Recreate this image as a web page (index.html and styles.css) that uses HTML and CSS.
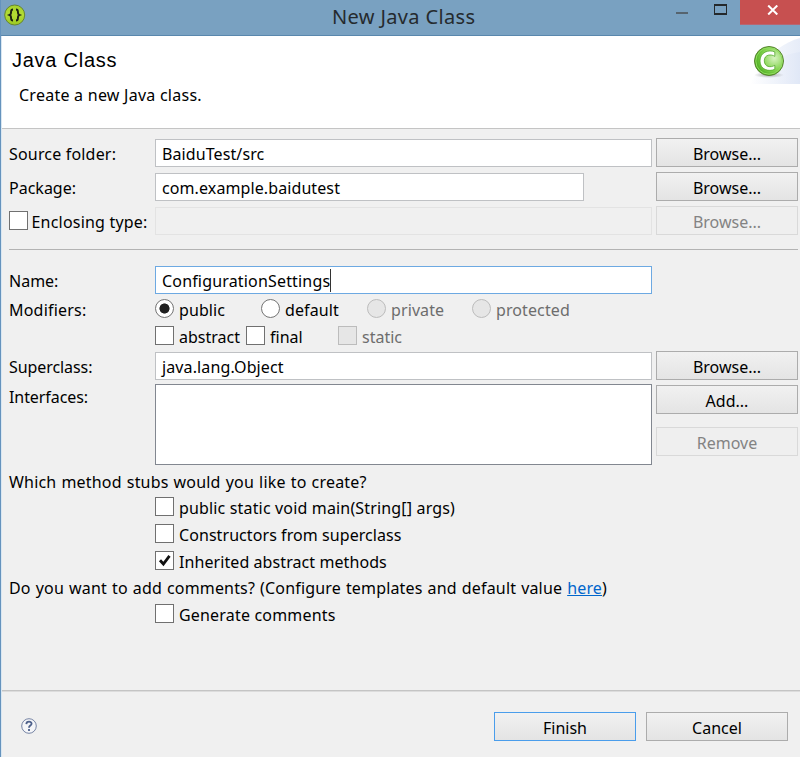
FILE: index.html
```html
<!DOCTYPE html>
<html lang="en">
<head>
<meta charset="utf-8">
<title>New Java Class</title>
<link rel="stylesheet" href="styles.css">
</head>
<body>
<div class="window">
  <header class="titlebar">
    <svg class="app-icon" width="22" height="22" viewBox="0 0 22 22">
      <defs><linearGradient id="lime" x1="0" y1="0" x2="0" y2="1"><stop offset="0" stop-color="#a4d12c"/><stop offset=".5" stop-color="#b3dc33"/><stop offset="1" stop-color="#9bc823"/></linearGradient></defs>
      <circle cx="10.7" cy="11" r="10" fill="url(#lime)" stroke="#67862c"/>
      <path d="M9 5.5C7.4 5.5 7.1 6.2 7.1 7.5C7.1 9.3 7.1 10.5 5.7 11C7.1 11.5 7.1 12.7 7.1 14.5C7.1 15.8 7.4 16.5 9 16.5M12 5.5C13.6 5.5 13.9 6.2 13.9 7.5C13.9 9.3 13.9 10.5 15.3 11C13.9 11.5 13.9 12.7 13.9 14.5C13.9 15.8 13.6 16.5 12 16.5" fill="none" stroke="#1c2113" stroke-width="1.9"/>
    </svg>
    <h1 class="title">New Java Class</h1>
    <div class="controls">
      <span class="minimize"></span>
      <span class="maximize"></span>
      <span class="close"><svg width="12" height="10" viewBox="0 0 12 10"><path d="M1.2.5L10.3 9.5M10.3.5L1.2 9.5" stroke="#fff" stroke-width="2"/></svg></span>
    </div>
  </header>
  <section class="banner">
    <div class="banner-text">
      <h2>Java Class</h2>
      <p><span class="t w-create">Create a new Java class.</span></p>
    </div>
    <svg class="class-icon" width="50" height="48" viewBox="0 0 50 48">
      <defs>
        <linearGradient id="sky" x1="0" x2="1"><stop offset="0" stop-color="#fff"/><stop offset="1" stop-color="#dee6f6"/></linearGradient>
        <radialGradient id="green" cx=".68" cy=".4" r=".75"><stop offset="0" stop-color="#d8f4c2"/><stop offset=".55" stop-color="#84d44f"/><stop offset="1" stop-color="#38a010"/></radialGradient>
        <radialGradient id="shade"><stop offset="0" stop-color="#777" stop-opacity=".6"/><stop offset="1" stop-color="#777" stop-opacity="0"/></radialGradient>
      </defs>
      <path d="M0 48C10 28 27 8 50 2V48Z" fill="url(#sky)" opacity=".75"/>
      <path d="M0 48C10 36 25 19 50 16V48Z" fill="url(#sky)" opacity=".75"/>
      <ellipse cx="19" cy="39" rx="15" ry="3" fill="url(#shade)"/>
      <circle cx="19" cy="25" r="14.5" fill="url(#green)" stroke="#57822f"/>
      <circle cx="19" cy="25" r="13.2" fill="none" stroke="#91db60" stroke-width="1"/>
      <path d="M24.8 15.9V20.4C21.5 17.9 14.3 18.2 14.3 24.7C14.3 31.3 21 31.8 24.8 29.3V33.3C18.8 36 10 33.7 10 25C10 16.2 18.7 13.2 24.8 15.9Z" fill="#fff" stroke="#45a01d" stroke-width=".7"/>
    </svg>
  </section>
  <main class="form">
    <div class="row"><label class="label"><span class="t w-source">Source folder:</span></label><div class="field"><span class="t w-src">BaiduTest/src</span></div><button>Browse...</button></div>
    <div class="row"><label class="label"><span class="t w-pack">Package:</span></label><div class="field short"><span class="t w-com">com.example.baidutest</span></div><button>Browse...</button></div>
    <div class="row"><label class="label option"><i class="check"></i><span class="t w-encl">Enclosing type:</span></label><div class="field off"></div><button disabled>Browse...</button></div>
    <hr>
    <div class="row name-row"><label class="label"><span class="t w-name">Name:</span></label><div class="field focus"><span class="t w-config">ConfigurationSettings</span><i class="caret"></i></div></div>
    <div class="row modifiers"><span class="label"><span class="t w-mod">Modifiers:</span></span>
      <div class="radios">
        <label class="option"><i class="radio on"></i><span class="t">public</span></label>
        <label class="option"><i class="radio"></i><span class="t">default</span></label>
        <label class="option gray"><i class="radio"></i><span class="t">private</span></label>
        <label class="option gray"><i class="radio"></i><span class="t">protected</span></label>
      </div>
    </div>
    <div class="flags">
      <label class="option"><i class="check"></i><span class="t">abstract</span></label>
      <label class="option"><i class="check"></i><span class="t">final</span></label>
      <label class="option gray"><i class="check"></i><span class="t">static</span></label>
    </div>
    <div class="row super-row"><label class="label"><span class="t w-super">Superclass:</span></label><div class="field"><span class="t w-obj">java.lang.Object</span></div><button>Browse...</button></div>
    <div class="row list-row"><label class="label"><span class="t w-inter">Interfaces:</span></label><div class="list"></div><div class="stack"><button>Add...</button><button disabled>Remove</button></div></div>
    <p class="question"><span class="t w-which">Which method stubs would you like to create?</span></p>
    <div class="stubs">
      <label class="option"><i class="check"></i><span class="t w-main">public static void main(String[] args)</span></label>
      <label class="option"><i class="check"></i><span class="t w-cons">Constructors from superclass</span></label>
      <label class="option"><i class="check"><svg width="17" height="17" viewBox="0 0 17 17"><path d="M4 8.2L7.4 12L13.5 3.8" fill="none" stroke="#111" stroke-width="2.8"/></svg></i><span class="t w-inh">Inherited abstract methods</span></label>
    </div>
    <p class="question comments"><span class="t w-do">Do you want to add comments? (Configure templates and default value <a>here</a>)</span></p>
    <div class="stubs last"><label class="option"><i class="check"></i><span class="t w-gen">Generate comments</span></label></div>
  </main>
  <footer class="footer">
    <svg class="help" width="16" height="16" viewBox="0 0 16 16"><circle cx="8" cy="8" r="7.3" fill="#f5f6f9" stroke="#7684a4" stroke-width="1"/><path d="M5.3 6.1C5.4 2.8 10.7 2.9 10.6 5.8C10.5 7.7 8 7.5 8 9.7M8 11V13" fill="none" stroke="#4f628c" stroke-width="1.8"/></svg>
    <button class="primary">Finish</button><button>Cancel</button>
  </footer>
</div>
</body>
</html>
```
FILE: styles.css
```css
* { box-sizing: border-box; }
body { margin: 0; background: #f0f0f0; color: #000; font: 16px/20px "Noto Sans", "Open Sans", sans-serif; }
h1, h2, p { margin: 0; font-weight: 400; }
svg { display: block; }
.window { width: 800px; height: 757px; border-left: 1px solid #6593bd; box-shadow: inset 1px 0 #d9e7f2; overflow: hidden; display: flex; flex-direction: column; }
.titlebar { height: 36px; flex: none; margin-left: -1px; background: #79a1c1; border-bottom: 1px solid #5987ad; display: flex; }
.app-icon { margin: 4px 0 0 4px; }
.title { flex: 1; padding-left: 306px; font-size: 20px; line-height: 33px; color: #252a2e; letter-spacing: .35px; white-space: nowrap; }
.controls { display: flex; }
.minimize { width: 12px; height: 2px; background: #56646f; margin: 12px 26px 0 0; }
.maximize { width: 13px; height: 11px; border: 2px solid #24282b; border-width: 2px 1.5px; margin: 4px 13px 0 0; }
.close { width: 60px; height: 25px; background: #c75050; border-bottom: 1px solid #b76570; padding: 5px 0 0 27px; }
.banner { height: 93px; flex: none; background: #fff; border-bottom: 1px solid #c4c4c4; margin-left: 1px; display: flex; justify-content: space-between; }
.banner-text { padding: 13px 0 0 10px; }
h2 { font: 20px/22px "Liberation Sans", sans-serif; letter-spacing: .75px; }
.banner p { padding: 14px 0 0 7px; }
.form { padding: 9px 2px 0 8px; height: 561px; flex: none; }
.t { white-space: nowrap; }
.row { display: grid; grid-template-columns: 146px 497px 142px; column-gap: 0; height: 29px; margin-bottom: 5px; }
.row > button, .stack { margin-left: 4px; width: 142px; }
.label { padding-top: 6px; display: block; }
.field { height: 28px; margin-top: 1px; background: #fff; border: 1px solid #bfc1c4; padding: 4px 6px 0; display: flex; }
.short { width: 429px; }
.off { background: #f0f0f0; border-color: #e3e3e3; }
.focus { border-color: #6da9e2; }
.caret { width: 1px; height: 23px; margin-top: -2px; background: #333; }
button { font: inherit; color: #000; padding: 3px 0 0; width: 142px; height: 29px; border: 1px solid #acacac; border-radius: 0; background: linear-gradient(#f1f1f1, #e4e4e4); display: block; }
button:disabled { color: #838383; border-color: #d9d9d9; background: #efefef; }
.primary { border-color: #4a9deb; }
hr { border: 0; height: 1px; background: #b3b3b3; margin: 14px 0 15px; }
.name-row { height: 29px; margin-bottom: 5px; }
.modifiers { height: 20px; margin-bottom: 7px; }
.modifiers .label { padding-top: 1px; }
.option { display: flex; height: 20px; align-items: flex-start; }
.option .t { margin: 1px 0 0 5px; }
.label.option { height: 29px; padding-top: 5px; }
.label.option .t { margin-left: 4px; }
.label .check { margin-left: -.5px; }
.check { width: 19px; height: 19px; flex: none; border: 1px solid #707070; background: #fff; }
.radio { width: 19px; height: 19px; flex: none; border: 1px solid #747474; border-radius: 50%; background: #fff; }
.on { background: radial-gradient(circle, #202020 0 4.7px, #fff 5.4px); }
.gray { color: #6d6d6d; }
.gray .check, .gray .radio { background: #e6e6e6; border-color: #bcbcbc; }
.radios { display: grid; grid-template-columns: 106px 106px 105px 110px; }
.radios .t { letter-spacing: .1px; }
.flags { display: grid; grid-template-columns: 91px 92px 90px; margin-left: 146px; height: 25px; }
.super-row { margin-bottom: 4px; }
.list-row { height: 81px; }
.list-row .label { padding-top: 3px; }
.list { border: 1px solid #828790; background: #fff; }
.stack { padding-top: 1px; display: grid; row-gap: 13px; align-content: start; }
.question { height: 20px; margin-top: 7px; }
.stubs { margin-left: 146px; padding-top: 5px; display: grid; row-gap: 7px; }
.comments { margin-top: 7px; }
.last { padding-top: 6px; }
.w-create { letter-spacing: .25px; }
.w-source { letter-spacing: .18px; }
.w-src { letter-spacing: .1px; }
.w-com { letter-spacing: .1px; }
.w-encl { letter-spacing: .2px; }
.w-config { letter-spacing: .17px; }
.w-mod { letter-spacing: .2px; }
.w-super, .w-inter { letter-spacing: -.08px; }
.w-obj { letter-spacing: .12px; }
.w-which { letter-spacing: .18px; word-spacing: .75px; }
.w-main { letter-spacing: .16px; }
.w-cons { letter-spacing: .07px; }
.w-inh { letter-spacing: .08px; }
.w-do { letter-spacing: .16px; word-spacing: .75px; }
.w-gen { letter-spacing: .18px; }
a { color: #0066cc; text-decoration: underline; }
.footer { flex: 1; border-top: 1px solid #c4c4c4; box-shadow: inset 0 1px #dcdcdc; display: flex; gap: 10px; padding: 21px 12px 0 20px; margin-left: 1px; }
.help { margin: 6px auto 0 -1px; }
```
